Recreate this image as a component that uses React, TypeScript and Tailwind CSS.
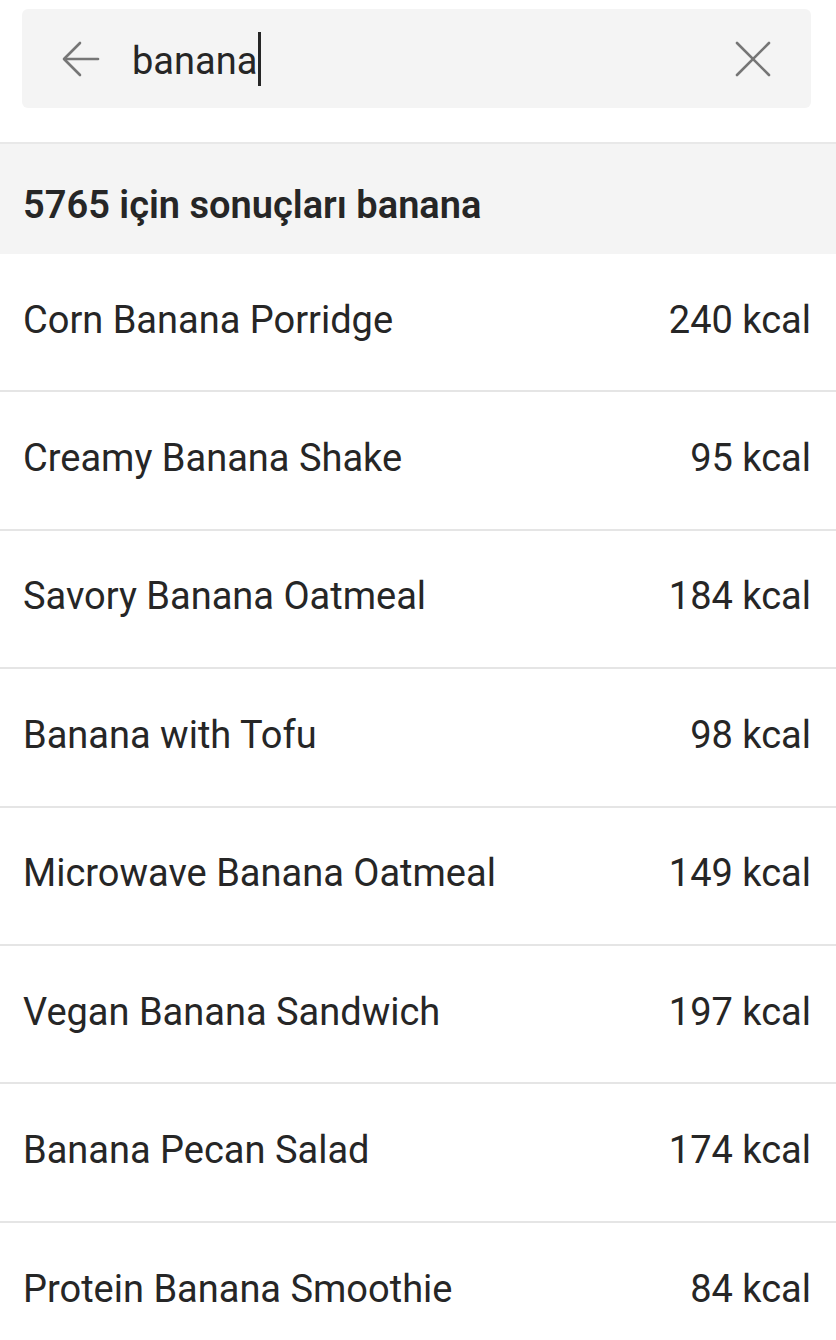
import React from 'react'

const items = [
  { name: 'Corn Banana Porridge', kcal: 240 },
  { name: 'Creamy Banana Shake', kcal: 95 },
  { name: 'Savory Banana Oatmeal', kcal: 184 },
  { name: 'Banana with Tofu', kcal: 98 },
  { name: 'Microwave Banana Oatmeal', kcal: 149 },
  { name: 'Vegan Banana Sandwich', kcal: 197 },
  { name: 'Banana Pecan Salad', kcal: 174 },
  { name: 'Protein Banana Smoothie', kcal: 84 },
]

export default function App() {
  return (
    <div className="w-[836px] h-[1340px] overflow-hidden bg-white text-[#262626] font-['Roboto',sans-serif]">
      {/* Search */}
      <div className="pt-[9px] pl-[22px] pr-[25px] pb-[34px]">
        <div className="h-[99px] rounded-[6px] bg-[#f4f4f4] flex items-center pl-[40px] pr-[40px]">
          <svg width="38" height="36" viewBox="0 0 38 36" fill="none" stroke="#767676" strokeWidth="2.6" strokeLinecap="round" strokeLinejoin="round">
            <path d="M36 18H3" />
            <path d="M18 2L2 18L18 34" />
          </svg>
          <div className="ml-[32px] flex items-center flex-1">
            <span className="text-[38px] leading-none pt-[4px]">banana</span>
            <span className="w-[3px] h-[54px] bg-[#262626] ml-[1px]" />
          </div>
          <svg width="36" height="36" viewBox="0 0 36 36" fill="none" stroke="#767676" strokeWidth="2.6" strokeLinecap="round">
            <path d="M2 2L34 34" />
            <path d="M34 2L2 34" />
          </svg>
        </div>
      </div>

      {/* Header band */}
      <div className="h-[112px] bg-[#f4f4f4] border-t-2 border-[#e8e8e8] flex items-center px-[23px] pt-[12px]">
        <span className="text-[38px] font-semibold">5765 için sonuçları banana</span>
      </div>

      {/* Results */}
      <div>
        {items.map((item, i) => (
          <div
            key={item.name}
            className={`h-[138.4px] flex items-center justify-between pl-[23px] pr-[25px] pb-[4px] ${i < items.length - 1 ? 'border-b-2 border-[#e5e5e5]' : ''}`}
          >
            <span className="text-[38px]">{item.name}</span>
            <span className="text-[38px]">{item.kcal} kcal</span>
          </div>
        ))}
      </div>
    </div>
  )
}
